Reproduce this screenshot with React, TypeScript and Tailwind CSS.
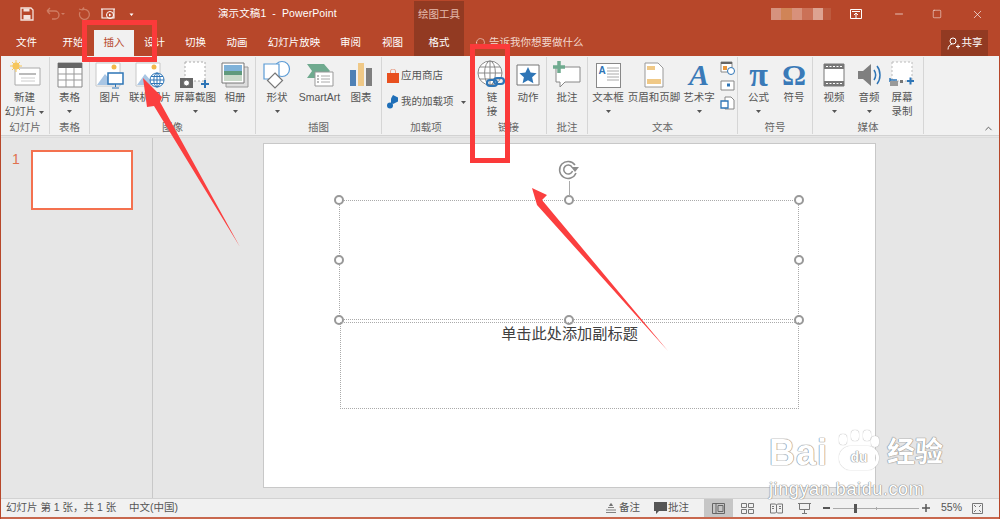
import React from 'react';
import {Minus, Search, Square, X, ChevronUp} from 'lucide-react';

const FONT = "font-['Liberation_Sans','Noto_Sans_CJK_SC',sans-serif]";

const Caret = () => (
  <svg width="5" height="3" viewBox="0 0 5 3" className="inline-block">
    <path d="M0 0h5L2.500 3z" fill="#555" />
  </svg>
);

const Item = ({
  className,
  lines,
  caret,
  children,
}: {
  className: string;
  lines: string[];
  caret?: boolean;
  children: React.ReactNode;
}) => (
  <div className={`${className} flex flex-col items-center shrink-0 pt-[3px]`}>
    <div className="h-[30px] flex items-center justify-center">{children}</div>
    {lines.map((l) => (
      <div key={l} className="h-[14px] leading-[14px] whitespace-nowrap">
        {l}
      </div>
    ))}
    {caret && (
      <div className="h-[14px] flex items-center justify-center">
        <Caret />
      </div>
    )}
  </div>
);

const Group = ({
  className,
  label,
  children,
}: {
  className: string;
  label: string;
  children: React.ReactNode;
}) => (
  <div className={`${className} shrink-0 flex flex-col border-r border-[#d6d6d6] my-[1px]`}>
    <div className="h-[64px] flex">{children}</div>
    <div className="h-[14px] leading-[14px] text-center text-[#666]">{label}</div>
  </div>
);

const Handle = ({className}: {className: string}) => (
  <div className={`${className} absolute w-[10px] h-[10px] rounded-full bg-white border-2 border-[#999]`} />
);

const PictureBase = () => (
  <>
    <path d="M2 3h24v23H2z" fill="#fff" stroke="#c8c8c8" />
    <circle cx="20" cy="7" r="2.500" fill="#f2b84b" />
    <path d="M3 25l8-11 7 8 3 3z" fill="#a9c6e4" />
  </>
);

const Globe = ({cx, cy, r, color}: {cx: number; cy: number; r: number; color: string}) => (
  <g fill="none" stroke={color} strokeWidth="1">
    <circle cx={cx} cy={cy} r={r} fill="#fff" />
    <ellipse cx={cx} cy={cy} rx={r * 0.45} ry={r} />
    <path d={`M${cx - r} ${cy}h${r * 2}M${cx - r * 0.85} ${cy - r * 0.5}h${r * 1.7}M${cx - r * 0.85} ${cy + r * 0.5}h${r * 1.7}M${cx} ${cy - r}v${r * 2}`} />
  </g>
);

export default function App() {
  return (
    <div className={`${FONT} relative w-[1000px] h-[519px] overflow-hidden flex flex-col bg-[#e6e6e6] text-[10.5px] text-[#444] border-x border-[#b7472a]`}>
      {/* Title bar */}
      <div className="bg-[#b7472a] text-white shrink-0">
        <div className="h-[28px] flex items-center">
          <div className="w-[217px] shrink-0 flex items-center pl-[18px]">
            <svg width="122" height="18" viewBox="0 0 122 18">
              <path d="M2 3h10l2 2v10H2z" fill="none" stroke="#f3e2dc" strokeWidth="1.300" />
              <path d="M4.500 3.500h6v3h-6zM4.500 10h7v4.500h-7z" fill="#f3e2dc" />
              <g fill="none" stroke="#cf7d64" strokeWidth="1.300">
                <path d="M28 6h8a4 4 0 0 1 0 8h-3M28 6l3-3M28 6l3 3" />
                <path d="M63 5a5 5 0 1 1-2 2M63 5l2-2.500M63 5l-3-1" />
              </g>
              <path d="M42 8h4l-2 2z" fill="#cf7d64" />
              <path d="M82 4h14M83 4v9h12V4" fill="none" stroke="#fff" strokeWidth="1.100" />
              <circle cx="91" cy="10" r="3.500" fill="none" stroke="#fff" strokeWidth="1" />
              <path d="M90 8.500l2.500 1.500-2.500 1.500z" fill="#fff" />
              <path d="M110.500 6h4M110.500 8.500h4l-2 2.500z" fill="#fff" />
            </svg>
          </div>
          <div className="w-[196px] shrink-0 text-[10.5px] tracking-[0.1px] whitespace-nowrap">演示文稿1&nbsp; -&nbsp; PowerPoint</div>
          <div className="w-[50px] h-full mt-[2px] shrink-0 bg-[#923a22] text-[#e6bcae] flex items-center justify-center">绘图工具</div>
          <div className="flex-1 flex justify-end items-center h-full">
            <div className="flex h-[12px] w-[60px] mr-[19px] opacity-60">
              <div className="w-[10px] bg-[#ecc4b6]" />
              <div className="w-[11px] bg-[#e2ad75]" />
              <div className="w-[10px] bg-[#efc3b2]" />
              <div className="w-[11px] bg-[#d98e75]" />
              <div className="w-[10px] bg-[#f7e0d6]" />
              <div className="w-[8px] bg-[#c2674c]" />
            </div>
            <svg width="12" height="11" viewBox="0 0 12 11" className="mr-[31px]">
              <path d="M.5 .5h11v9H.5z" fill="none" stroke="#fff" />
              <path d="M2 2.500h8M6 9V4M4 6l2-2 2 2" fill="none" stroke="#fff" />
            </svg>
            <Minus size={12} strokeWidth={1.3} className="mr-[27px]" />
            <Square size={10} strokeWidth={1.2} className="mr-[29px]" />
            <X size={13} strokeWidth={1.2} className="mr-[15px]" />
          </div>
        </div>
        <div className="h-[28px] flex items-stretch">
          <div className="w-[51px] flex items-center justify-center pt-[1px]">文件</div>
          <div className="w-[42px] flex items-center justify-center pt-[1px]">开始</div>
          <div className="w-[40px] mt-[2px] bg-[#f1f1f1] text-[#b7472a] flex items-center justify-center">插入</div>
          <div className="w-[41px] flex items-center justify-center pt-[1px]">设计</div>
          <div className="w-[41px] flex items-center justify-center pt-[1px]">切换</div>
          <div className="w-[42px] flex items-center justify-center pt-[1px]">动画</div>
          <div className="w-[72px] flex items-center justify-center pt-[1px]">幻灯片放映</div>
          <div className="w-[41px] flex items-center justify-center pt-[1px]">审阅</div>
          <div className="w-[43px] flex items-center justify-center pt-[1px]">视图</div>
          <div className="w-[50px] bg-[#923a22] flex items-center justify-center pt-[1px]">格式</div>
          <div className="ml-[10px] flex items-center gap-[3px] pt-[2px] text-[#f3d9cf]">
            <Search size={12} strokeWidth={1.3} className="-scale-x-100" />
            <span>告诉我你想要做什么</span>
          </div>
          <div className="ml-auto mr-[11px] mt-[2px] w-[47px] bg-[#923a22] flex items-center justify-center gap-[2px]">
            <svg width="13" height="13" viewBox="0 0 13 13" fill="none" stroke="#fff" strokeWidth="1">
              <circle cx="6" cy="4" r="3" />
              <path d="M1 12.500c0-3 2-5 4-5.500M9 9.500h4M11 7.500v4" />
            </svg>
            <span>共享</span>
          </div>
        </div>
      </div>

      {/* Ribbon */}
      <div className="h-[80px] shrink-0 bg-[#f1f1f1] border-b border-[#d2d2d2] flex text-[#555]">
        <Group className="w-[49px]" label="幻灯片">
          <div className="w-[47px] flex flex-col items-center pt-[3px]">
            <svg width="32" height="30" viewBox="0 0 32 30">
              <path d="M6 8h25v17H6z" fill="#fff" stroke="#aaa" />
              <path d="M10 13h17v2H10z" fill="#bbb" />
              <path d="M12 18h14M12 21h14" stroke="#ccc" />
              <circle cx="7" cy="6" r="3.500" fill="#f6c65b" />
              <path d="M7 0v12M1 6h12M3 2l8 8M11 2l-8 8" stroke="#f6c65b" />
            </svg>
            <div className="h-[14px] leading-[14px]">新建</div>
            <div className="h-[14px] leading-[14px] whitespace-nowrap">幻灯片 <Caret /></div>
          </div>
        </Group>
        <Group className="w-[40px]" label="表格">
          <Item className="w-[39px]" lines={['表格']} caret>
            <svg width="26" height="26" viewBox="0 0 26 26">
              <path d="M1 1h24v24H1z" fill="#fff" stroke="#888" />
              <path d="M1 1h24v5H1z" fill="#666" />
              <path d="M9 6v19M17 6v19M1 12h24M1 18h24" stroke="#999" />
            </svg>
          </Item>
        </Group>
        <Group className="w-[166px]" label="图像">
          <Item className="w-[40px]" lines={['图片']}>
            <svg width="32" height="30" viewBox="0 0 32 30">
              <PictureBase />
              <path d="M14 13h15v11H14z" fill="#fff" stroke="#2e75b6" strokeWidth="1.500" />
              <path d="M21.500 24v3M18 28h7" stroke="#2e75b6" />
            </svg>
          </Item>
          <Item className="w-[40px]" lines={['联机图片']}>
            <svg width="32" height="30" viewBox="0 0 32 30">
              <PictureBase />
              <Globe cx={23} cy={20} r={7} color="#2e75b6" />
            </svg>
          </Item>
          <Item className="w-[50px]" lines={['屏幕截图']} caret>
            <svg width="32" height="30" viewBox="0 0 32 30">
              <path d="M6 2h20v19H6z" fill="#fff" stroke="#aaa" strokeDasharray="2 2" />
              <path d="M1 18h13v10H1z" fill="#666" />
              <circle cx="7.500" cy="23" r="3" fill="#fff" stroke="#666" />
              <path d="M22 24h8M26 20v8" stroke="#2e75b6" strokeWidth="2" />
            </svg>
          </Item>
          <Item className="w-[30px]" lines={['相册']} caret>
            <svg width="28" height="28" viewBox="0 0 28 28">
              <path d="M5 6h22v20H5z" fill="#ddd" stroke="#999" />
              <path d="M1 2h22v20H1z" fill="#fff" stroke="#777" />
              <path d="M3 4h18v6H3z" fill="#7fb2d9" />
              <path d="M3 10h18v4H3z" fill="#5f9a7c" />
              <path d="M3 14h18v6H3z" fill="#c9d9c9" />
            </svg>
          </Item>
        </Group>
        <Group className="w-[126px]" label="插图">
          <Item className="w-[42px]" lines={['形状']} caret>
            <svg width="30" height="30" viewBox="0 0 30 30" fill="#fff" stroke="#5b9bd5" strokeWidth="1.200">
              <circle cx="20" cy="9" r="7.500" />
              <path d="M2 4h15v15H2z" />
              <path d="M13 13l7.500 7.500-7.500 7.500-7.500-7.500z" stroke="#777" />
            </svg>
          </Item>
          <Item className="w-[43px]" lines={['SmartArt']}>
            <svg width="28" height="28" viewBox="0 0 28 28">
              <path d="M1 3h17l6 7-6 7H1l5-7z" fill="#6faa8f" />
              <path d="M9 11h18v14H9z" fill="#fff" stroke="#999" />
              <path d="M15 15h9M15 18h9M15 21h9" stroke="#aaa" />
              <path d="M11 15h2M11 18h2M11 21h2" stroke="#777" />
            </svg>
          </Item>
          <Item className="w-[40px]" lines={['图表']}>
            <svg width="24" height="26" viewBox="0 0 24 26">
              <path d="M1 8h6v16H1z" fill="#4f81b5" />
              <path d="M9 1h6v23H9z" fill="#f0c987" />
              <path d="M17 6h6v18h-6z" fill="#7f7f7f" />
            </svg>
          </Item>
        </Group>
        <Group className="w-[89px]" label="加载项">
          <div className="flex flex-col pl-[5px] pt-[11px] gap-[10px]">
            <div className="flex items-center gap-[2px] h-[16px]">
              <svg width="12" height="14" viewBox="0 0 12 14">
                <path d="M0 4h12v10H0z" fill="#e8501f" />
                <path d="M3.500 4V2a2.500 2 0 0 1 5 0v2" fill="none" stroke="#e8a08a" />
              </svg>
              <span>应用商店</span>
            </div>
            <div className="flex items-center gap-[2px] h-[16px] whitespace-nowrap">
              <svg width="12" height="14" viewBox="0 0 12 14" fill="#1f6fb8">
                <path d="M6 0l5 2.500v4l-5 2.500-2-1V3.500L6 0z" />
                <circle cx="3" cy="10.500" r="3" />
              </svg>
              <span>我的加载项</span>
              <span className="ml-[5px]"><Caret /></span>
            </div>
          </div>
        </Group>
        <Group className="w-[76px]" label="链接">
          <Item className="w-[42px]" lines={['链', '接']}>
            <svg width="30" height="30" viewBox="0 0 30 30">
              <Globe cx={13} cy={13} r={12} color="#8a8a8a" />
              <g fill="none" stroke="#2e75b6" strokeWidth="2.200">
                <rect x="10" y="20" width="10" height="6" rx="3" />
                <rect x="17" y="18" width="10" height="6" rx="3" />
              </g>
            </svg>
          </Item>
          <Item className="w-[30px]" lines={['动作']}>
            <svg width="24" height="22" viewBox="0 0 24 22">
              <path d="M1 1h22v20H1z" fill="#fff" stroke="#777" />
              <path d="M12 3l2.600 5.600 6 .7-4.500 4 1.300 6L12 16.300 6.600 19.300l1.300-6-4.500-4 6-.7z" fill="#2e75b6" />
            </svg>
          </Item>
        </Group>
        <Group className="w-[41px]" label="批注">
          <Item className="w-[40px]" lines={['批注']}>
            <svg width="28" height="28" viewBox="0 0 28 28">
              <path d="M3 6h24v15H12l-5 5v-5H3z" fill="#fff" stroke="#888" />
              <path d="M0 6h12M6 0v12" stroke="#6faa8f" strokeWidth="3.500" />
            </svg>
          </Item>
        </Group>
        <Group className="w-[150px]" label="文本">
          <Item className="w-[40px]" lines={['文本框']} caret>
            <div className="relative w-[25px] h-[25px] bg-white border border-[#888] text-[#2e75b6] font-bold text-[10px] leading-[14px] pl-[2px]">
              A
              <svg width="12" height="16" viewBox="0 0 12 16" className="absolute right-[1px] top-[3px]">
                <path d="M0 1h12M0 4h12M0 7h12M0 10h12M0 13h12" stroke="#aaa" />
              </svg>
            </div>
          </Item>
          <Item className="w-[52px]" lines={['页眉和页脚']}>
            <svg width="20" height="26" viewBox="0 0 20 26">
              <path d="M1 1h13l5 5v19H1z" fill="#fff" stroke="#999" />
              <path d="M3 4h8v4H3zM3 17h14v5H3z" fill="#f0c987" />
            </svg>
          </Item>
          <Item className="w-[38px]" lines={['艺术字']} caret>
            <span className="text-[30px] leading-[30px] font-bold italic text-[#3a7ab8] font-['Liberation_Serif',serif]">A</span>
          </Item>
          <div className="w-[19px] flex flex-col items-center gap-[5px] pt-[4px]">
            <svg width="15" height="14" viewBox="0 0 15 14">
              <path d="M1 1h11v10H1z" fill="#fff" stroke="#888" />
              <path d="M1 1h11v2H1z" fill="#666" />
              <path d="M3 5h4v4H3z" fill="#e8963c" />
              <circle cx="11" cy="10" r="3.500" fill="#fff" stroke="#2e75b6" />
            </svg>
            <svg width="15" height="11" viewBox="0 0 15 11">
              <path d="M1 1h13v9H1z" fill="#fff" stroke="#888" />
              <path d="M7 3.500h3v3H7z" fill="#2e75b6" />
            </svg>
            <svg width="15" height="14" viewBox="0 0 15 14">
              <path d="M5 1h6l3 3v9H5z" fill="#fff" stroke="#888" />
              <path d="M1 5h7v7H1z" fill="#fff" stroke="#2e75b6" strokeWidth="1.300" />
            </svg>
          </div>
        </Group>
        <Group className="w-[75px]" label="符号">
          <Item className="w-[41px]" lines={['公式']} caret>
            <span className="text-[34px] leading-[30px] text-[#3a7ab8] font-bold font-['Liberation_Serif',serif]">π</span>
          </Item>
          <Item className="w-[30px]" lines={['符号']}>
            <span className="text-[30px] leading-[30px] text-[#3a7ab8] font-bold font-['Liberation_Serif',serif]">Ω</span>
          </Item>
        </Group>
        <Group className="w-[111px]" label="媒体">
          <Item className="w-[42px]" lines={['视频']} caret>
            <svg width="22" height="24" viewBox="0 0 22 24">
              <path d="M1 1h20v22H1z" fill="#fff" stroke="#777" />
              <path d="M1 1h20v5H1zM1 18h20v5H1z" fill="#777" />
              <path d="M3 3.500h16M3 20.500h16" stroke="#fff" strokeDasharray="2 1.500" />
            </svg>
          </Item>
          <Item className="w-[28px]" lines={['音频']} caret>
            <svg width="24" height="26" viewBox="0 0 24 26">
              <path d="M1 9h5l8-7v22l-8-7H1z" fill="#7f7f7f" />
              <path d="M17 8c2 3 2 7 0 10M20 4c4 5 4 13 0 18" fill="none" stroke="#2e75b6" strokeWidth="1.500" />
            </svg>
          </Item>
          <Item className="w-[38px]" lines={['屏幕', '录制']}>
            <svg width="26" height="28" viewBox="0 0 26 28">
              <path d="M3 1h20v19H3z" fill="#fff" stroke="#bbb" strokeDasharray="2 2" />
              <path d="M1 19h7M1 17v4" stroke="#2e75b6" strokeWidth="1.500" />
              <path d="M1 20h8v5H1z" fill="#999" />
              <path d="M11 19h3v3h-3z" fill="#777" />
              <path d="M18 20h7M21.500 16.500v7" stroke="#2e75b6" strokeWidth="2" />
            </svg>
          </Item>
        </Group>
        <div className="flex-1 flex items-end justify-end pr-[5px] pb-[1px]">
          <ChevronUp size={11} strokeWidth={2} className="text-[#555]" />
        </div>
      </div>

      {/* Slide panes */}
      <div className="flex-1 flex min-h-0 border-t border-[#dcdcdc] mt-[1px]">
        <div className="w-[152px] shrink-0 border-r border-[#c8c8c8] flex items-start pt-[12px]">
          <div className="w-[30px] pl-[11px] mt-[2px] text-[14px] leading-[14px] text-[#e0714f]">1</div>
          <div className="w-[102px] h-[60px] bg-white border-2 border-[#f4714f]" />
        </div>
        <div className="flex-1 pl-[110px] pt-[5px]">
          <div className="relative w-[613px] h-[345px] bg-white border border-[#c8c8c8]">
            {/* Title placeholder */}
            <div className="absolute left-[75px] top-[56px] w-[460px] h-[120px] border border-dotted border-[#aaa]">
              <Handle className="-left-[6px] -top-[6px]" />
              <Handle className="left-[224px] -top-[6px]" />
              <Handle className="-right-[6px] -top-[6px]" />
              <Handle className="-left-[6px] top-[54px]" />
              <Handle className="-right-[6px] top-[54px]" />
              <Handle className="-left-[6px] -bottom-[6px]" />
              <Handle className="left-[224px] -bottom-[6px]" />
              <Handle className="-right-[6px] -bottom-[6px]" />
              <div className="absolute left-[229px] -top-[20px] w-[1px] h-[15px] bg-[#aaa]" />
              <svg width="24" height="22" viewBox="0 0 24 22" className="absolute left-[217px] -top-[42px]" fill="none" stroke="#8c8c8c" strokeWidth="1.500">
                <path d="M18 6a8.500 8.500 0 1 0 1 8" />
                <path d="M15 8a4.500 4.500 0 1 0 .5 4" />
                <path d="M14 8l8 0-4 5z" fill="#8c8c8c" stroke="none" />
              </svg>
            </div>
            {/* Subtitle placeholder */}
            <div className="absolute left-[76px] top-[178px] w-[459px] h-[87px] border border-dotted border-[#aaa] text-center text-[15.200px] leading-[22px] text-[#404040]">
              单击此处添加副标题
            </div>
          </div>
        </div>
      </div>

      {/* Status bar */}
      <div className="h-[21px] shrink-0 bg-[#f1f1f1] border-t border-[#d2d2d2] border-b-2 border-b-[#c8684e] flex items-center text-[#555]">
        <span className="ml-[5px] w-[123px] whitespace-nowrap">幻灯片 第 1 张，共 1 张</span>
        <span>中文(中国)</span>
        <div className="ml-auto flex items-center h-full">
          <svg width="10" height="10" viewBox="0 0 10 10" className="mr-[3px]">
            <path d="M0 9.500h10M0 7h10M2 4.500h6M3.500 2.500l1.500-2 1.500 2z" stroke="#666" fill="#666" strokeWidth=".8" />
          </svg>
          <span className="w-[35px] whitespace-nowrap">备注</span>
          <svg width="13" height="12" viewBox="0 0 13 12" className="mr-[1px]">
            <path d="M0 0h13v9H5l-3 3V9H0z" fill="#555" />
          </svg>
          <span className="w-[21px] whitespace-nowrap">批注</span>
          <div className="ml-[15px] w-[29px] h-full bg-[#c6c6c6] flex items-center justify-center">
            <svg width="13" height="11" viewBox="0 0 13 11" fill="none" stroke="#666">
              <path d="M.5 .5h12v10H.5zM4 .5v10M6 2.500h5v6H6z" />
            </svg>
          </div>
          <svg width="13" height="11" viewBox="0 0 13 11" fill="none" stroke="#777" className="ml-[8px]">
            <path d="M.5 .5h5v4h-5zM7.500 .5h5v4h-5zM.5 6.500h5v4h-5zM7.500 6.500h5v4h-5z" />
          </svg>
          <svg width="13" height="11" viewBox="0 0 13 11" fill="none" stroke="#777" className="ml-[16px]">
            <path d="M.5 1h5l1 1 1-1h5v9h-5l-1-1-1 1h-5zM6.500 2v7M2 3.500h2M2 5.500h2M9 3.500h2M9 5.500h2" />
          </svg>
          <svg width="13" height="11" viewBox="0 0 13 11" fill="none" stroke="#777" className="ml-[15px]">
            <path d="M0 .5h13M1.500 .5v6h10v-6M6.500 6.500v4M4 10.500h5" />
          </svg>
          <div className="ml-[12px] w-[7px] h-[2px] bg-[#555]" />
          <div className="relative ml-[3px] w-[86px] h-[1px] bg-[#aaa]">
            <div className="absolute left-[21px] -top-[4px] w-[3px] h-[9px] bg-[#555]" />
            <div className="absolute left-[43px] -top-[1px] w-[1px] h-[3px] bg-[#aaa]" />
          </div>
          <svg width="8" height="8" viewBox="0 0 8 8" className="ml-[3px]">
            <path d="M0 4h8M4 0v8" stroke="#555" strokeWidth="1.500" />
          </svg>
          <span className="ml-[11px] w-[26px] whitespace-nowrap">55%</span>
          <svg width="11" height="11" viewBox="0 0 11 11" fill="none" stroke="#777" className="ml-[5px] mr-[16px]">
            <path d="M.5 .5h10v10H.5z" />
            <path d="M2 2l2 2M9 2L7 4M2 9l2-2M9 9L7 7" />
          </svg>
        </div>
      </div>

      {/* Screenshot annotations */}
      <svg width="1000" height="519" viewBox="0 0 1000 519" className="absolute left-[-1px] top-0 pointer-events-none">
        <g fill="none" stroke="#fb3a3a" strokeWidth="5">
          <path d="M84.500 22.500h70v37h-70z" />
          <path d="M472.500 46.500h35v114h-35z" />
        </g>
        <g fill="#fb3f3f">
          <path d="M143 78L162 97L160 102L240 247L154 106L147 107z" />
          <path d="M532 188L547 195L542 200L668 351L537 205z" />
        </g>
      </svg>

      {/* Baidu watermark */}
      <div className="absolute left-[768px] top-[428px] pointer-events-none text-white [text-shadow:0_0_1px_#888,0_0_1px_#888,0_0_1px_#888]">
        <div className="flex items-center h-[50px]">
          <span className="text-[36px] font-bold leading-[50px] tracking-[1px] w-[68px]">Bai</span>
          <div className="relative w-[40px] h-[24px] mt-[10px] ml-[2px] rounded-full border-[3px] border-white shadow-[0_0_1px_#888] text-[14px] font-bold leading-[16px] text-center">
            du
            <div className="absolute -left-[3px] -top-[15px] w-[8px] h-[11px] rounded-full bg-white shadow-[0_0_1px_#888]" />
            <div className="absolute left-[9px] -top-[19px] w-[8px] h-[11px] rounded-full bg-white shadow-[0_0_1px_#888]" />
            <div className="absolute left-[21px] -top-[19px] w-[8px] h-[11px] rounded-full bg-white shadow-[0_0_1px_#888]" />
            <div className="absolute -right-[3px] -top-[13px] w-[8px] h-[11px] rounded-full bg-white shadow-[0_0_1px_#888]" />
          </div>
          <span className="ml-[8px] text-[28px] font-bold leading-[50px]">经验</span>
        </div>
        <div className="text-[18px] leading-[18px] tracking-[0.6px] mt-[2px] whitespace-nowrap">jingyan.baidu.com</div>
      </div>
    </div>
  );
}
